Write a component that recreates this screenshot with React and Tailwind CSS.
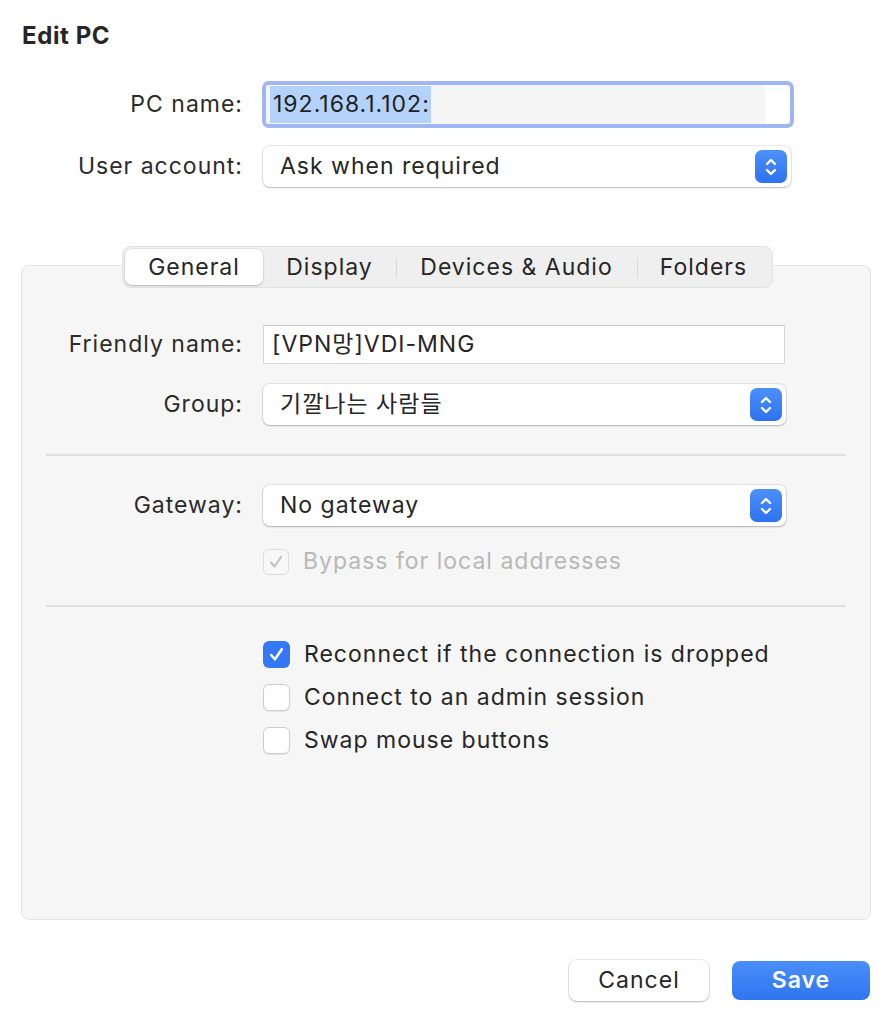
import React from 'react';

const FONT = { fontFamily: 'Inter, "Noto Sans CJK KR", sans-serif' };

function Stepper() {
  return (
    <div className="w-[32px] h-[33px] rounded-[7px] bg-gradient-to-b from-[#4b90fa] to-[#2e72ef] flex items-center justify-center">
      <svg width="14" height="22" viewBox="0 0 14 22" fill="none" stroke="white" strokeWidth="2.4" strokeLinecap="round" strokeLinejoin="round">
        <path d="M3 8 L7 4 L11 8" />
        <path d="M3 14 L7 18 L11 14" />
      </svg>
    </div>
  );
}

function Select({ value, w, h = 'h-[41px]' }) {
  return (
    <div className={`${w} ${h} bg-white rounded-[7px] flex items-center justify-between pl-[17px] pr-[4px] shadow-[0_0_0_1px_rgba(0,0,0,0.07),0_1px_2px_rgba(0,0,0,0.22)]`}>
      <span className="text-[23px] text-[#262626]">{value}</span>
      <Stepper />
    </div>
  );
}

function Check({ checked, disabled }) {
  if (checked && disabled) {
    return (
      <div className="w-[26px] h-[26px] rounded-[6px] border border-[#dcdcdc] bg-[#f8f8f8] flex items-center justify-center">
        <svg width="16" height="16" viewBox="0 0 16 16" fill="none" stroke="#c3c3c3" strokeWidth="2.2" strokeLinecap="round" strokeLinejoin="round">
          <path d="M3 8.5 L6.5 12.5 L13 3" />
        </svg>
      </div>
    );
  }
  if (checked) {
    return (
      <div className="w-[27px] h-[27px] rounded-[6px] bg-[#3478f6] flex items-center justify-center">
        <svg width="17" height="17" viewBox="0 0 16 16" fill="none" stroke="white" strokeWidth="2.4" strokeLinecap="round" strokeLinejoin="round">
          <path d="M3 8.5 L6.5 12.5 L13 3" />
        </svg>
      </div>
    );
  }
  return <div className="w-[27px] h-[27px] rounded-[6px] bg-white border border-[#cdcdcd] shadow-[0_1px_1px_rgba(0,0,0,0.08)]" />;
}

function CheckRow({ checked, disabled, label }) {
  return (
    <div className="flex items-center gap-[14px] h-[27px]">
      <Check checked={checked} disabled={disabled} />
      <span className={`text-[23px] ${disabled ? 'text-[#b8b8b8]' : 'text-[#262626]'}`}>{label}</span>
    </div>
  );
}

export default function App() {
  const tabs = [
    { name: 'General', w: 'w-[138px]', active: true },
    { name: 'Display', w: 'w-[133px]' },
    { name: 'Devices & Audio', w: 'w-[241px]' },
    { name: 'Folders', w: 'w-[133px]' },
  ];

  return (
    <div className="w-[892px] h-[1024px] bg-white flex flex-col tracking-[1px]" style={FONT}>
      <h1 className="pt-[23px] pl-[22px] text-[24px] leading-[26px] font-bold text-[#262626] tracking-[0.6px]">Edit PC</h1>

      {/* PC name */}
      <div className="mt-[32px] flex items-center">
        <div className="w-[243px] text-right text-[23px] text-[#2b2b2b]">PC name:</div>
        <div className="ml-[19px] w-[532px] h-[47px] rounded-[7px] border-[4px] border-[#a0b6f2] bg-white flex items-stretch overflow-hidden">
          <div className="flex items-center pl-[4px] bg-[#f5f5f5] w-[499px]">
            <span className="text-[23px] text-[#1f1f1f] bg-[#b3d3fd] leading-[37px] pl-[3px] pr-[1px]">192.168.1.102:</span>
          </div>
        </div>
      </div>

      {/* User account */}
      <div className="mt-[18px] flex items-center">
        <div className="w-[243px] text-right text-[23px] text-[#2b2b2b]">User account:</div>
        <div className="ml-[20px]">
          <Select value="Ask when required" w="w-[528px]" />
        </div>
      </div>

      {/* Tabs panel */}
      <div className="mt-[78px] mx-[21px] h-[655px] bg-[#f6f6f6] border border-[#e4e4e4] rounded-[8px] flex flex-col">
        <div className="-mt-[20px] ml-[100px] flex">
          <div className="flex items-center p-[2px] bg-[#efefef] rounded-[9px] border border-[#e2e2e2] h-[42px]">
            {tabs.map((t, i) => (
              <div key={t.name} className={`${t.w} h-[36px] flex items-center justify-center relative`}>
                {t.active ? (
                  <div className="absolute inset-0 bg-white rounded-[7px] shadow-[0_1px_2px_rgba(0,0,0,0.2),0_0_0_0.5px_rgba(0,0,0,0.08)]" />
                ) : null}
                {i > 1 ? <div className="absolute left-0 top-[9px] w-px h-[20px] bg-[#d8d8d8]" /> : null}
                <span className="relative text-[23px] text-[#262626]">{t.name}</span>
              </div>
            ))}
          </div>
        </div>

        {/* Friendly name */}
        <div className="mt-[37px] flex items-center">
          <div className="w-[221px] text-right text-[23px] text-[#2b2b2b]">Friendly name:</div>
          <div className="ml-[20px] w-[522px] h-[39px] bg-white border border-[#d8d8d8] border-t-[#c9c9c9] flex items-center pl-[8px]">
            <span className="text-[23px] text-[#262626]">[VPN망]VDI-MNG</span>
          </div>
        </div>

        {/* Group */}
        <div className="mt-[20px] flex items-center">
          <div className="w-[221px] text-right text-[23px] text-[#2b2b2b]">Group:</div>
          <div className="ml-[20px]">
            <Select value="기깔나는 사람들" w="w-[523px]" />
          </div>
        </div>

        <div className="mt-[29px] mx-[24px] h-[2px] bg-[#e0e0e0]" />

        {/* Gateway */}
        <div className="mt-[29px] flex items-center">
          <div className="w-[221px] text-right text-[23px] text-[#2b2b2b]">Gateway:</div>
          <div className="ml-[20px]">
            <Select value="No gateway" w="w-[523px]" />
          </div>
        </div>

        <div className="mt-[22px] ml-[241px]">
          <CheckRow checked disabled label="Bypass for local addresses" />
        </div>

        <div className="mt-[30px] mx-[24px] h-[2px] bg-[#e0e0e0]" />

        <div className="mt-[34px] ml-[241px] flex flex-col gap-[16px]">
          <CheckRow checked label="Reconnect if the connection is dropped" />
          <CheckRow label="Connect to an admin session" />
          <CheckRow label="Swap mouse buttons" />
        </div>
      </div>

      {/* Buttons */}
      <div className="mt-[40px] mr-[22px] flex justify-end items-center gap-[23px]">
        <button className="w-[140px] h-[41px] bg-white rounded-[8px] text-[23px] text-[#262626] shadow-[0_0_0_1px_rgba(0,0,0,0.08),0_1px_2px_rgba(0,0,0,0.22)]">
          Cancel
        </button>
        <button className="w-[138px] h-[39px] rounded-[8px] bg-gradient-to-b from-[#4a8ef9] to-[#2f75f0] text-[23px] font-semibold text-white">
          Save
        </button>
      </div>
    </div>
  );
}
